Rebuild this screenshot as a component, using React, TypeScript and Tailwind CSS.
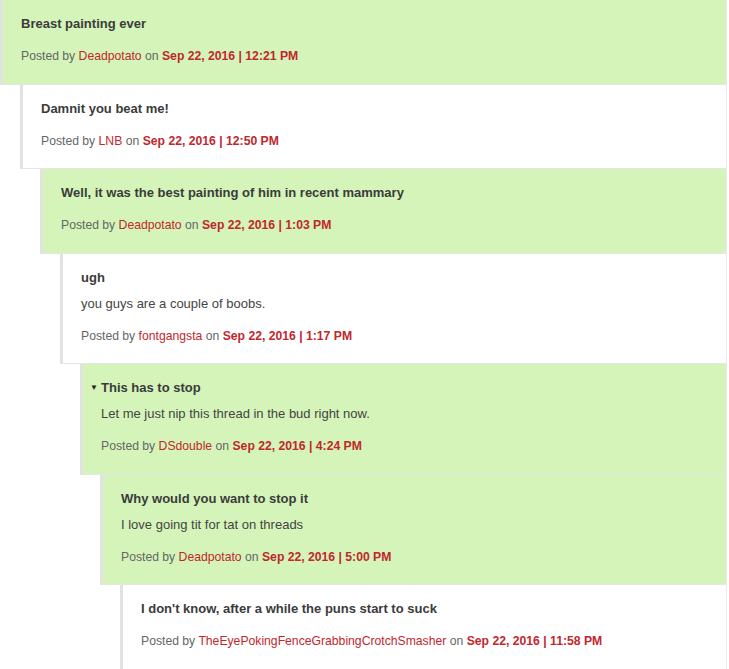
import React from 'react';

type Comment = {
  level: number;
  title: string;
  body?: string;
  author: string;
  date: string;
  green: boolean;
  toggle?: boolean;
};

const comments: Comment[] = [
  { level: 0, title: 'Breast painting ever', author: 'Deadpotato', date: 'Sep 22, 2016 | 12:21 PM', green: true },
  { level: 1, title: 'Damnit you beat me!', author: 'LNB', date: 'Sep 22, 2016 | 12:50 PM', green: false },
  { level: 2, title: 'Well, it was the best painting of him in recent mammary', author: 'Deadpotato', date: 'Sep 22, 2016 | 1:03 PM', green: true },
  { level: 3, title: 'ugh', body: 'you guys are a couple of boobs.', author: 'fontgangsta', date: 'Sep 22, 2016 | 1:17 PM', green: false },
  { level: 4, title: 'This has to stop', body: 'Let me just nip this thread in the bud right now.', author: 'DSdouble', date: 'Sep 22, 2016 | 4:24 PM', green: true, toggle: true },
  { level: 5, title: 'Why would you want to stop it', body: 'I love going tit for tat on threads', author: 'Deadpotato', date: 'Sep 22, 2016 | 5:00 PM', green: true },
  { level: 6, title: "I don't know, after a while the puns start to suck", author: 'TheEyePokingFenceGrabbingCrotchSmasher', date: 'Sep 22, 2016 | 11:58 PM', green: false },
];

const indent = ['ml-0', 'ml-[20px]', 'ml-[40px]', 'ml-[60px]', 'ml-[80px]', 'ml-[100px]', 'ml-[120px]'];

const CommentBox = ({ c }: { c: Comment }) => (
  <div
    className={`${indent[c.level]} border-l-[3px] border-b border-r border-l-[#e2e2e2] border-b-[#e6e6e6] border-r-[#ececec] pl-[18px] pr-4 pt-[14px] pb-[17.5px] ${
      c.green ? 'bg-[#d4f4b9]' : 'bg-white'
    }`}
  >
    <div className="relative text-[13px] leading-5 font-bold text-[#3b3b3b]">
      {c.toggle && (
        <span className="absolute left-[-11px] top-0 text-[8px] leading-5 text-[#222]">▼</span>
      )}
      {c.title}
    </div>
    {c.body && <div className="mt-[6px] text-[13px] leading-5 text-[#444]">{c.body}</div>}
    <div className="mt-[12px] text-[12.2px] leading-5 text-[#666]">
      Posted by <span className="text-[#c1272d]">{c.author}</span> on{' '}
      <span className="font-bold text-[#c1272d]">{c.date}</span>
    </div>
  </div>
);

export default function App() {
  return (
    <div className="w-[727px] bg-white font-['Liberation_Sans',Arial,sans-serif]">
      {comments.map((c, i) => (
        <CommentBox key={i} c={c} />
      ))}
    </div>
  );
}
